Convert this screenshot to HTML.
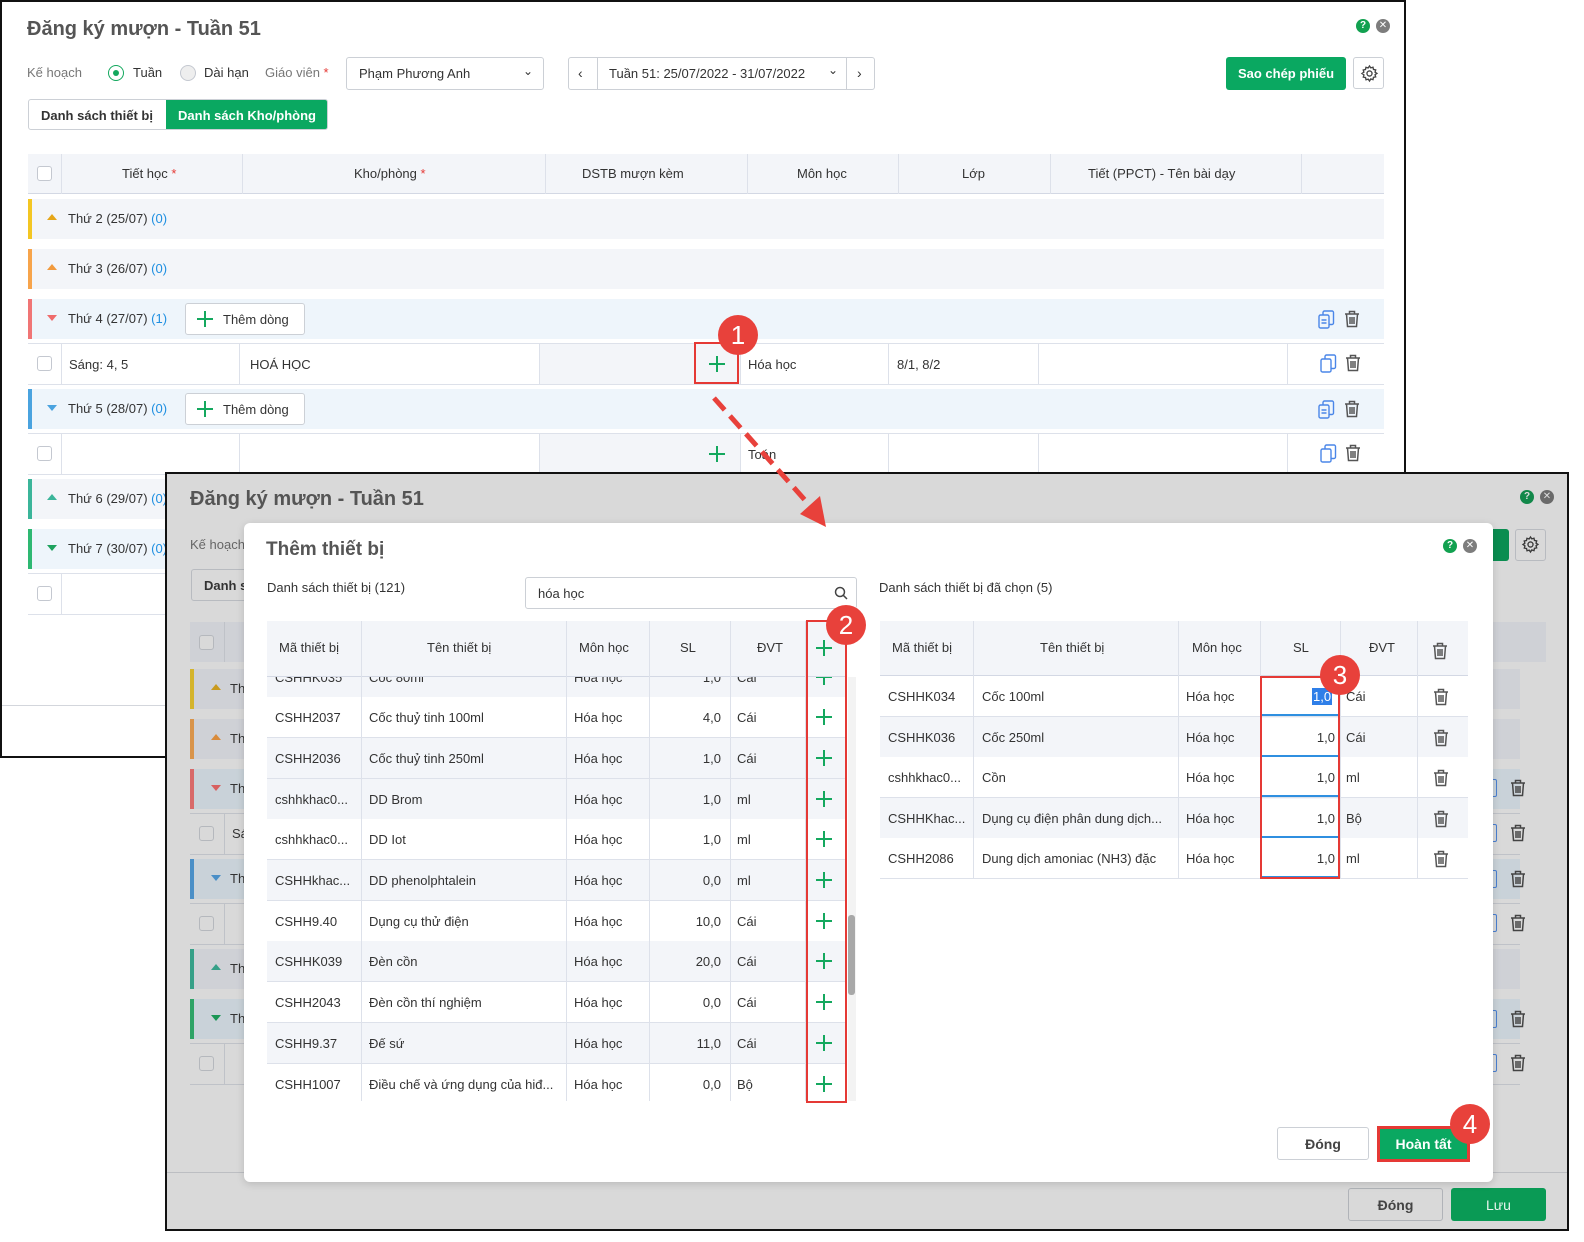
<!DOCTYPE html>
<html><head><meta charset="utf-8">
<style>
*{box-sizing:border-box;margin:0;padding:0}
body{width:1584px;height:1242px;background:#fff;position:relative;overflow:hidden;font-family:"Liberation Sans","DejaVu Sans",sans-serif;font-size:13px;color:#333}
.a{position:absolute}
.win{position:absolute;border:2px solid #111;background:#fff;overflow:hidden}
.t{position:absolute;white-space:nowrap}
.vc{display:flex;align-items:center}
.cb{position:absolute;width:15px;height:15px;border:1px solid #c4c8d0;border-radius:3px;background:#fff}
.plus{position:absolute;width:16px;height:16px}
.plus:before,.plus:after{content:"";position:absolute;background:#14a85e}
.plus:before{left:7px;top:0;width:2px;height:16px}
.plus:after{left:0;top:7px;width:16px;height:2px}
.grp{position:absolute;height:40px}
.bar{position:absolute;left:0;top:0;width:4px;height:40px}
.tri-u{position:absolute;width:0;height:0;border-left:5px solid transparent;border-right:5px solid transparent;border-bottom:6px solid}
.tri-d{position:absolute;width:0;height:0;border-left:5px solid transparent;border-right:5px solid transparent;border-top:6px solid}
.blue{color:#1e8fe1}
.btnw{position:absolute;border:1px solid #ccd0d6;border-radius:3px;background:#fff}
.vl{position:absolute;width:1px;background:#dde1ea}
.hl{position:absolute;height:1px;background:#dde1ea}
.badge{position:absolute;width:40px;height:40px;border-radius:50%;background:#e8413b;color:#fff;font-size:26px;text-align:center;line-height:40px}
.rbox{position:absolute;border:2px solid #e53935}
</style></head><body>

<!-- ================= WINDOW 1 ================= -->
<div class="win" style="left:0;top:0;width:1406px;height:758px">
 <div class="t" style="left:25px;top:16px;font-size:20px;font-weight:bold;color:#555">Đăng ký mượn - Tuần 51</div>
 <div class="a" style="left:1354px;top:17px;width:14px;height:14px;border-radius:50%;background:#12a150;color:#fff;font-size:10px;font-weight:bold;text-align:center;line-height:14px">?</div>
 <div class="a" style="left:1374px;top:17px;width:14px;height:14px;border-radius:50%;background:#7d7d7d;color:#fff;font-size:10px;text-align:center;line-height:14px">✕</div>

 <div class="t" style="left:25px;top:63px;color:#777">Kế hoạch</div>
 <div class="a" style="left:106px;top:63px;width:16px;height:16px;border-radius:50%;border:1px solid #14a85e"><div class="a" style="left:4px;top:4px;width:6px;height:6px;border-radius:50%;background:#14a85e"></div></div>
 <div class="t" style="left:131px;top:63px">Tuần</div>
 <div class="a" style="left:178px;top:63px;width:16px;height:16px;border-radius:50%;border:1px solid #c4c8d0;background:#eee"></div>
 <div class="t" style="left:202px;top:63px">Dài hạn</div>
 <div class="t" style="left:263px;top:63px;color:#777">Giáo viên <span style="color:#e53935">*</span></div>
 <div class="btnw" style="left:344px;top:55px;width:198px;height:33px"><div class="t" style="left:12px;top:8px">Phạm Phương Anh</div><div class="t" style="left:176px;top:6px;font-size:12px">⌄</div></div>
 <div class="btnw" style="left:566px;top:55px;width:307px;height:33px">
  <div class="t" style="left:9px;top:7px;font-size:14px">‹</div>
  <div class="vl" style="left:28px;top:0;height:31px;background:#ccd0d6"></div>
  <div class="t" style="left:40px;top:8px">Tuần 51: 25/07/2022 - 31/07/2022</div>
  <div class="t" style="left:259px;top:5px;font-size:12px">⌄</div>
  <div class="vl" style="left:277px;top:0;height:31px;background:#ccd0d6"></div>
  <div class="t" style="left:288px;top:7px;font-size:14px">›</div>
 </div>
 <div class="a vc" style="left:1224px;top:55px;width:120px;height:33px;background:#0aa861;border-radius:3px;color:#fff;font-weight:bold;justify-content:center">Sao chép phiếu</div>
 <div class="btnw" style="left:1351px;top:55px;width:31px;height:32px"><svg class="a" style="left:6px;top:6px" width="19" height="19" viewBox="0 0 24 24" fill="none" stroke="#444" stroke-width="1.7"><circle cx="12" cy="12" r="3.2"/><path d="M12 2.5l1.6 2.4 2.8-.8.6 2.8 2.8.6-.8 2.8 2.4 1.6-2.4 1.6.8 2.8-2.8.6-.6 2.8-2.8-.8L12 21.5l-1.6-2.4-2.8.8-.6-2.8-2.8-.6.8-2.8L2.5 12l2.4-1.6-.8-2.8 2.8-.6.6-2.8 2.8.8z"/></svg></div>

 <div class="btnw" style="left:26px;top:97px;width:300px;height:31px;overflow:hidden">
  <div class="t" style="left:12px;top:8px;font-weight:bold">Danh sách thiết bị</div>
  <div class="a vc" style="left:137px;top:0;width:162px;height:31px;background:#0aa861;color:#fff;font-weight:bold;justify-content:center">Danh sách Kho/phòng</div>
 </div>

 <div class="a" style="left:26px;top:152px;width:1356px;height:40px;background:#f3f5f9;border-bottom:1px solid #d3d8e4"></div>
 <div class="cb" style="left:35px;top:164px"></div>
 <div class="vl" style="left:59px;top:152px;height:40px"></div><div class="vl" style="left:240px;top:152px;height:40px"></div><div class="vl" style="left:543px;top:152px;height:40px"></div><div class="vl" style="left:745px;top:152px;height:40px"></div><div class="vl" style="left:896px;top:152px;height:40px"></div><div class="vl" style="left:1048px;top:152px;height:40px"></div><div class="vl" style="left:1299px;top:152px;height:40px"></div>
 <div class="t" style="left:120px;top:164px">Tiết học <span style="color:#e53935">*</span></div>
 <div class="t" style="left:352px;top:164px">Kho/phòng <span style="color:#e53935">*</span></div>
 <div class="t" style="left:580px;top:164px">DSTB mượn kèm</div>
 <div class="t" style="left:795px;top:164px">Môn học</div>
 <div class="t" style="left:960px;top:164px">Lớp</div>
 <div class="t" style="left:1086px;top:164px">Tiết (PPCT) - Tên bài dạy</div>

 <div class="grp" style="left:26px;top:197px;width:1356px;background:#f3f5f9"><div class="bar" style="background:#f3c623"></div><div class="tri-u" style="left:19px;top:15px;border-bottom-color:#e5a619"></div><div class="t" style="left:40px;top:12px">Thứ 2 (25/07) <span class="blue">(0)</span></div></div>
 <div class="grp" style="left:26px;top:247px;width:1356px;background:#f3f5f9"><div class="bar" style="background:#f7a44b"></div><div class="tri-u" style="left:19px;top:15px;border-bottom-color:#f19a3e"></div><div class="t" style="left:40px;top:12px">Thứ 3 (26/07) <span class="blue">(0)</span></div></div>
 <div class="grp" style="left:26px;top:297px;width:1356px;background:#eef5fb"><div class="bar" style="background:#f07575"></div><div class="tri-d" style="left:19px;top:16px;border-top-color:#ef6b6b"></div><div class="t" style="left:40px;top:12px">Thứ 4 (27/07) <span class="blue">(1)</span></div></div>
 <div class="btnw" style="left:183px;top:301px;width:120px;height:32px"><div class="plus" style="left:11px;top:7px"></div><div class="t" style="left:37px;top:8px">Thêm dòng</div></div>
 <div class="hl" style="left:26px;top:341px;width:1356px"></div><div class="hl" style="left:26px;top:382px;width:1356px"></div>
 <div class="a" style="left:538px;top:342px;width:200px;height:40px;background:#f3f5f9"></div>
 <div class="vl" style="left:59px;top:342px;height:40px"></div><div class="vl" style="left:237px;top:342px;height:40px"></div><div class="vl" style="left:537px;top:342px;height:40px"></div><div class="vl" style="left:738px;top:342px;height:40px"></div><div class="vl" style="left:886px;top:342px;height:40px"></div><div class="vl" style="left:1036px;top:342px;height:40px"></div><div class="vl" style="left:1285px;top:342px;height:40px"></div>
 <div class="cb" style="left:35px;top:354px"></div>
 <div class="t" style="left:67px;top:355px">Sáng: 4, 5</div><div class="t" style="left:248px;top:355px">HOÁ HỌC</div>
 <div class="plus" style="left:707px;top:354px"></div>
 <div class="t" style="left:746px;top:355px">Hóa học</div><div class="t" style="left:895px;top:355px">8/1, 8/2</div>
 <div class="grp" style="left:26px;top:387px;width:1356px;background:#eef5fb"><div class="bar" style="background:#4aa3df"></div><div class="tri-d" style="left:19px;top:16px;border-top-color:#4aa3df"></div><div class="t" style="left:40px;top:12px">Thứ 5 (28/07) <span class="blue">(0)</span></div></div>
 <div class="btnw" style="left:183px;top:391px;width:120px;height:32px"><div class="plus" style="left:11px;top:7px"></div><div class="t" style="left:37px;top:8px">Thêm dòng</div></div>
 <div class="hl" style="left:26px;top:431px;width:1356px"></div><div class="hl" style="left:26px;top:472px;width:1356px"></div>
 <div class="a" style="left:538px;top:432px;width:200px;height:40px;background:#f3f5f9"></div>
 <div class="vl" style="left:59px;top:432px;height:40px"></div><div class="vl" style="left:237px;top:432px;height:40px"></div><div class="vl" style="left:537px;top:432px;height:40px"></div><div class="vl" style="left:738px;top:432px;height:40px"></div><div class="vl" style="left:886px;top:432px;height:40px"></div><div class="vl" style="left:1036px;top:432px;height:40px"></div><div class="vl" style="left:1285px;top:432px;height:40px"></div>
 <div class="cb" style="left:35px;top:444px"></div>
 <div class="plus" style="left:707px;top:444px"></div><div class="t" style="left:746px;top:445px">Toán</div>
 <div class="grp" style="left:26px;top:477px;width:1356px;background:#f3f5f9"><div class="bar" style="background:#3bb59a"></div><div class="tri-u" style="left:19px;top:15px;border-bottom-color:#3bb59a"></div><div class="t" style="left:40px;top:12px">Thứ 6 (29/07) <span class="blue">(0)</span></div></div>
 <div class="grp" style="left:26px;top:527px;width:1356px;background:#eef5fb"><div class="bar" style="background:#2eb872"></div><div class="tri-d" style="left:19px;top:16px;border-top-color:#1ea25e"></div><div class="t" style="left:40px;top:12px">Thứ 7 (30/07) <span class="blue">(0)</span></div></div>
 <div class="hl" style="left:26px;top:571px;width:1356px"></div><div class="hl" style="left:26px;top:612px;width:1356px"></div>
 <div class="vl" style="left:59px;top:572px;height:40px"></div>
 <div class="cb" style="left:35px;top:584px"></div>
 <div class="hl" style="left:0;top:703px;width:1406px;background:#d3d6dc"></div>
 <svg class="a" style="left:1316px;top:308px" width="18" height="20" viewBox="0 0 18 20" fill="none" stroke="#4a86e8" stroke-width="1.4"><rect x="1" y="5" width="10" height="13" rx="1.5"/><path d="M5 5V2.5A1.5 1.5 0 0 1 6.5 1H14a1.5 1.5 0 0 1 1.5 1.5V13a1.5 1.5 0 0 1-1.5 1.5h-3"/><path d="M3.5 10h5M3.5 13h5"/></svg>
 <svg class="a" style="left:1316px;top:398px" width="18" height="20" viewBox="0 0 18 20" fill="none" stroke="#4a86e8" stroke-width="1.4"><rect x="1" y="5" width="10" height="13" rx="1.5"/><path d="M5 5V2.5A1.5 1.5 0 0 1 6.5 1H14a1.5 1.5 0 0 1 1.5 1.5V13a1.5 1.5 0 0 1-1.5 1.5h-3"/><path d="M3.5 10h5M3.5 13h5"/></svg>
 <svg class="a" style="left:1318px;top:352px" width="18" height="20" viewBox="0 0 18 20" fill="none" stroke="#4a86e8" stroke-width="1.4"><rect x="1" y="5" width="10" height="13" rx="1.5"/><path d="M5 5V2.5A1.5 1.5 0 0 1 6.5 1H14a1.5 1.5 0 0 1 1.5 1.5V13a1.5 1.5 0 0 1-1.5 1.5h-3"/></svg>
 <svg class="a" style="left:1318px;top:442px" width="18" height="20" viewBox="0 0 18 20" fill="none" stroke="#4a86e8" stroke-width="1.4"><rect x="1" y="5" width="10" height="13" rx="1.5"/><path d="M5 5V2.5A1.5 1.5 0 0 1 6.5 1H14a1.5 1.5 0 0 1 1.5 1.5V13a1.5 1.5 0 0 1-1.5 1.5h-3"/></svg>
 <svg class="a" style="left:1342px;top:308px" width="16" height="18" viewBox="0 0 16 18" fill="none" stroke="#555" stroke-width="1.5"><path d="M1 4h14M5.5 4V1.5h5V4M2.5 4l1 12.5h9l1-12.5M6 7v7M8 7v7M10 7v7"/></svg>
 <svg class="a" style="left:1343px;top:352px" width="16" height="18" viewBox="0 0 16 18" fill="none" stroke="#555" stroke-width="1.5"><path d="M1 4h14M5.5 4V1.5h5V4M2.5 4l1 12.5h9l1-12.5M6 7v7M8 7v7M10 7v7"/></svg>
 <svg class="a" style="left:1342px;top:398px" width="16" height="18" viewBox="0 0 16 18" fill="none" stroke="#555" stroke-width="1.5"><path d="M1 4h14M5.5 4V1.5h5V4M2.5 4l1 12.5h9l1-12.5M6 7v7M8 7v7M10 7v7"/></svg>
 <svg class="a" style="left:1343px;top:442px" width="16" height="18" viewBox="0 0 16 18" fill="none" stroke="#555" stroke-width="1.5"><path d="M1 4h14M5.5 4V1.5h5V4M2.5 4l1 12.5h9l1-12.5M6 7v7M8 7v7M10 7v7"/></svg>
</div>

<div class="rbox" style="left:694px;top:342px;width:45px;height:42px"></div>
<div class="badge" style="left:718px;top:315px">1</div>

<!-- ================= WINDOW 2 ================= -->
<div class="win" style="left:165px;top:472px;width:1404px;height:759px;background:#d9d9d9">
 <div class="t" style="left:23px;top:14px;font-size:20px;font-weight:bold;color:#555">Đăng ký mượn - Tuần 51</div>
 <div class="a" style="left:1353px;top:16px;width:14px;height:14px;border-radius:50%;background:#12884a;color:#ddd;font-size:10px;font-weight:bold;text-align:center;line-height:14px">?</div>
 <div class="a" style="left:1373px;top:16px;width:14px;height:14px;border-radius:50%;background:#6a6a6a;color:#ddd;font-size:10px;text-align:center;line-height:14px">✕</div>
 <div class="t" style="left:23px;top:63px;color:#666">Kế hoạch</div>
 <div class="a" style="left:1300px;top:55px;width:42px;height:32px;background:#0a8d50;border-radius:3px"></div>
 <div class="a" style="left:1348px;top:55px;width:31px;height:32px;border:1px solid #b8bbc0;border-radius:3px"><svg class="a" style="left:5px;top:5px" width="19" height="19" viewBox="0 0 24 24" fill="none" stroke="#3a3a3a" stroke-width="1.7"><circle cx="12" cy="12" r="3.2"/><path d="M12 2.5l1.6 2.4 2.8-.8.6 2.8 2.8.6-.8 2.8 2.4 1.6-2.4 1.6.8 2.8-2.8.6-.6 2.8-2.8-.8L12 21.5l-1.6-2.4-2.8.8-.6-2.8-2.8-.6.8-2.8L2.5 12l2.4-1.6-.8-2.8 2.8-.6.6-2.8 2.8.8z"/></svg></div>
 <div class="a" style="left:24px;top:95px;width:100px;height:32px;border:1px solid #b8bbc0;border-radius:3px"><div class="t" style="left:12px;top:8px;font-weight:bold">Danh sách</div></div>
 <div class="a" style="left:23px;top:148px;width:1356px;height:40px;background:#cfd1d6"></div>
 <div class="cb" style="left:32px;top:161px;background:#d9d9d9;border-color:#b5b8bd"></div>
 <div class="vl" style="left:57px;top:148px;height:40px;background:#bfc2c8"></div>
 <div class="grp" style="left:23px;top:195px;width:1330px;background:#cfd1d6"><div class="bar" style="background:#d4b42c"></div><div class="tri-u" style="left:21px;top:15px;border-bottom-color:#c99a1e"></div><div class="t" style="left:40px;top:12px">Thứ</div></div>
 <div class="grp" style="left:23px;top:245px;width:1330px;background:#cfd1d6"><div class="bar" style="background:#d9944a"></div><div class="tri-u" style="left:21px;top:15px;border-bottom-color:#d98b3b"></div><div class="t" style="left:40px;top:12px">Thứ</div></div>
 <div class="grp" style="left:23px;top:295px;width:1330px;background:#c9d2d9"><div class="bar" style="background:#d86a6a"></div><div class="tri-d" style="left:21px;top:16px;border-top-color:#d86060"></div><div class="t" style="left:40px;top:12px">Thứ</div></div>
 <div class="hl" style="left:23px;top:339px;width:1330px;background:#bfc2c8"></div><div class="hl" style="left:23px;top:380px;width:1330px;background:#bfc2c8"></div>
 <div class="cb" style="left:32px;top:352px;background:#d9d9d9;border-color:#b5b8bd"></div><div class="vl" style="left:57px;top:340px;height:40px;background:#bfc2c8"></div><div class="t" style="left:65px;top:352px">Sá</div>
 <div class="grp" style="left:23px;top:385px;width:1330px;background:#c9d2d9"><div class="bar" style="background:#4a8fc7"></div><div class="tri-d" style="left:21px;top:16px;border-top-color:#4a8fc7"></div><div class="t" style="left:40px;top:12px">Thứ</div></div>
 <div class="hl" style="left:23px;top:429px;width:1330px;background:#bfc2c8"></div><div class="hl" style="left:23px;top:470px;width:1330px;background:#bfc2c8"></div>
 <div class="cb" style="left:32px;top:442px;background:#d9d9d9;border-color:#b5b8bd"></div><div class="vl" style="left:57px;top:430px;height:40px;background:#bfc2c8"></div>
 <div class="grp" style="left:23px;top:475px;width:1330px;background:#cfd1d6"><div class="bar" style="background:#36a088"></div><div class="tri-u" style="left:21px;top:15px;border-bottom-color:#36a088"></div><div class="t" style="left:40px;top:12px">Thứ</div></div>
 <div class="grp" style="left:23px;top:525px;width:1330px;background:#c9d2d9"><div class="bar" style="background:#2ea366"></div><div class="tri-d" style="left:21px;top:16px;border-top-color:#1a9655"></div><div class="t" style="left:40px;top:12px">Thứ</div></div>
 <div class="hl" style="left:23px;top:569px;width:1330px;background:#bfc2c8"></div><div class="hl" style="left:23px;top:610px;width:1330px;background:#bfc2c8"></div>
 <div class="cb" style="left:32px;top:582px;background:#d9d9d9;border-color:#b5b8bd"></div><div class="vl" style="left:57px;top:570px;height:40px;background:#bfc2c8"></div>
 <div class="hl" style="left:0;top:698px;width:1404px;background:#bcbec2"></div>
 <div class="a vc" style="left:1181px;top:714px;width:95px;height:33px;border:1px solid #b0b3b8;border-radius:3px;justify-content:center;font-weight:bold;color:#444;font-size:14px">Đóng</div>
 <div class="a vc" style="left:1284px;top:714px;width:95px;height:33px;background:#0a9a55;border-radius:3px;justify-content:center;color:#e8f5ee;font-size:14px">Lưu</div>
 <svg class="a" style="left:1343px;top:305px" width="16" height="18" viewBox="0 0 16 18" fill="none" stroke="#444" stroke-width="1.5"><path d="M1 4h14M5.5 4V1.5h5V4M2.5 4l1 12.5h9l1-12.5M6 7v7M8 7v7M10 7v7"/></svg>
 <svg class="a" style="left:1343px;top:350px" width="16" height="18" viewBox="0 0 16 18" fill="none" stroke="#444" stroke-width="1.5"><path d="M1 4h14M5.5 4V1.5h5V4M2.5 4l1 12.5h9l1-12.5M6 7v7M8 7v7M10 7v7"/></svg>
 <svg class="a" style="left:1343px;top:396px" width="16" height="18" viewBox="0 0 16 18" fill="none" stroke="#444" stroke-width="1.5"><path d="M1 4h14M5.5 4V1.5h5V4M2.5 4l1 12.5h9l1-12.5M6 7v7M8 7v7M10 7v7"/></svg>
 <svg class="a" style="left:1343px;top:440px" width="16" height="18" viewBox="0 0 16 18" fill="none" stroke="#444" stroke-width="1.5"><path d="M1 4h14M5.5 4V1.5h5V4M2.5 4l1 12.5h9l1-12.5M6 7v7M8 7v7M10 7v7"/></svg>
 <svg class="a" style="left:1343px;top:536px" width="16" height="18" viewBox="0 0 16 18" fill="none" stroke="#444" stroke-width="1.5"><path d="M1 4h14M5.5 4V1.5h5V4M2.5 4l1 12.5h9l1-12.5M6 7v7M8 7v7M10 7v7"/></svg>
 <svg class="a" style="left:1343px;top:580px" width="16" height="18" viewBox="0 0 16 18" fill="none" stroke="#444" stroke-width="1.5"><path d="M1 4h14M5.5 4V1.5h5V4M2.5 4l1 12.5h9l1-12.5M6 7v7M8 7v7M10 7v7"/></svg>
 <div class="a" style="left:1324px;top:305px;width:6px;height:18px;border:1.5px solid #4a7fd0;border-left:none;border-radius:0 2px 2px 0"></div>
 <div class="a" style="left:1324px;top:350px;width:6px;height:18px;border:1.5px solid #4a7fd0;border-left:none;border-radius:0 2px 2px 0"></div>
 <div class="a" style="left:1324px;top:396px;width:6px;height:18px;border:1.5px solid #4a7fd0;border-left:none;border-radius:0 2px 2px 0"></div>
 <div class="a" style="left:1324px;top:440px;width:6px;height:18px;border:1.5px solid #4a7fd0;border-left:none;border-radius:0 2px 2px 0"></div>
 <div class="a" style="left:1324px;top:536px;width:6px;height:18px;border:1.5px solid #4a7fd0;border-left:none;border-radius:0 2px 2px 0"></div>
 <div class="a" style="left:1324px;top:580px;width:6px;height:18px;border:1.5px solid #4a7fd0;border-left:none;border-radius:0 2px 2px 0"></div>
</div>

<!-- ================= DIALOG ================= -->
<div class="a" style="left:244px;top:523px;width:1249px;height:659px;background:#fff;border-radius:6px;box-shadow:0 2px 8px rgba(0,0,0,.15)">
 <div class="t" style="left:22px;top:16px;font-size:19px;font-weight:bold;color:#555">Thêm thiết bị</div>
 <div class="a" style="left:1199px;top:16px;width:14px;height:14px;border-radius:50%;background:#12a150;color:#fff;font-size:10px;font-weight:bold;text-align:center;line-height:14px">?</div>
 <div class="a" style="left:1219px;top:16px;width:14px;height:14px;border-radius:50%;background:#7d7d7d;color:#fff;font-size:10px;text-align:center;line-height:14px">✕</div>
 <div class="t" style="left:23px;top:57px">Danh sách thiết bị (121)</div>
 <div class="btnw" style="left:281px;top:54px;width:332px;height:32px"><div class="t" style="left:12px;top:8px">hóa học</div>
  <svg class="a" style="left:308px;top:8px" width="14" height="14" viewBox="0 0 14 14" fill="none" stroke="#444" stroke-width="1.5"><circle cx="6" cy="6" r="4.5"/><path d="M9.3 9.3L13 13"/></svg></div>
 <div class="t" style="left:635px;top:57px">Danh sách thiết bị đã chọn (5)</div>
</div>

<!-- left table -->
<div class="a" style="left:267px;top:621px;width:580px;height:480px;overflow:hidden">
 <div id="lrows"></div>
 <div class="a" style="left:0;top:0;width:580px;height:56px;background:#f3f5f9;border-bottom:1px solid #d3d8e4">
 <div class="vl" style="left:94px;top:0;height:56px"></div><div class="vl" style="left:299px;top:0;height:56px"></div><div class="vl" style="left:382px;top:0;height:56px"></div><div class="vl" style="left:463px;top:0;height:56px"></div><div class="vl" style="left:538px;top:0;height:56px"></div>
 <div class="t" style="left:12px;top:19px">Mã thiết bị</div>
 <div class="t" style="left:160px;top:19px">Tên thiết bị</div>
 <div class="t" style="left:312px;top:19px">Môn học</div>
 <div class="t" style="left:413px;top:19px">SL</div>
 <div class="t" style="left:490px;top:19px">ĐVT</div>
 <div class="plus" style="left:549px;top:19px"></div>
 </div>
</div>
<div class="a" style="left:848px;top:677px;width:8px;height:424px;background:#f3f3f3"></div>
<div class="a" style="left:848px;top:915px;width:7px;height:80px;background:#a8a8a8;border-radius:3px"></div>

<!-- right table -->
<div class="a" style="left:880px;top:621px;width:588px;height:260px;overflow:hidden">
 <div class="a" style="left:0;top:0;width:588px;height:55px;background:#f3f5f9;border-bottom:1px solid #d3d8e4"></div>
 <div class="vl" style="left:93px;top:0;height:55px"></div><div class="vl" style="left:298px;top:0;height:55px"></div><div class="vl" style="left:380px;top:0;height:55px"></div><div class="vl" style="left:460px;top:0;height:55px"></div><div class="vl" style="left:537px;top:0;height:55px"></div>
 <div class="t" style="left:12px;top:19px">Mã thiết bị</div>
 <div class="t" style="left:160px;top:19px">Tên thiết bị</div>
 <div class="t" style="left:312px;top:19px">Môn học</div>
 <div class="t" style="left:413px;top:19px">SL</div>
 <div class="t" style="left:489px;top:19px">ĐVT</div>
 <svg class="a" style="left:552px;top:21px" width="16" height="18" viewBox="0 0 16 18" fill="none" stroke="#555" stroke-width="1.5"><path d="M1 4h14M5.5 4V1.5h5V4M2.5 4l1 12.5h9l1-12.5M6 7v7M8 7v7M10 7v7"/></svg>
 <div id="rrows"></div>
</div>

<div class="rbox" style="left:806px;top:620px;width:41px;height:483px"></div>
<div class="badge" style="left:826px;top:605px">2</div>
<div class="rbox" style="left:1260px;top:676px;width:80px;height:203px"></div>
<div class="badge" style="left:1320px;top:655px">3</div>

<div class="a vc" style="left:1277px;top:1127px;width:92px;height:33px;border:1px solid #ccd0d6;border-radius:3px;justify-content:center;font-weight:bold;color:#444;font-size:14px">Đóng</div>
<div class="a vc" style="left:1377px;top:1126px;width:93px;height:36px;background:#0aa861;border:3px solid #e53935;justify-content:center;color:#fff;font-weight:bold;font-size:14px">Hoàn tất</div>
<div class="badge" style="left:1450px;top:1104px">4</div>

<!-- arrow on top -->
<svg class="a" style="left:700px;top:390px" width="140" height="145" viewBox="0 0 140 145"><path d="M14 8L112 118" stroke="#e8413b" stroke-width="5" stroke-dasharray="16 8" fill="none"/><path d="M126 137L100 124L120 106Z" fill="#e8413b"/></svg>

<script>
var L=[["CSHHK035","Cốc 80ml","1,0","Cái"],["CSHH2037","Cốc thuỷ tinh 100ml","4,0","Cái"],["CSHH2036","Cốc thuỷ tinh 250ml","1,0","Cái"],["cshhkhac0...","DD Brom","1,0","ml"],["cshhkhac0...","DD Iot","1,0","ml"],["CSHHkhac...","DD phenolphtalein","0,0","ml"],["CSHH9.40","Dụng cụ thử điện","10,0","Cái"],["CSHHK039","Đèn cồn","20,0","Cái"],["CSHH2043","Đèn cồn thí nghiệm","0,0","Cái"],["CSHH9.37","Đế sứ","11,0","Cái"],["CSHH1007","Điều chế và ứng dụng của hiđ...","0,0","Bộ"]];
var h="",y=56-20.5,bg=["#f3f5f9","#fff","#f3f5f9","#f3f5f9","#fff","#f3f5f9","#fff","#f3f5f9","#fff","#f3f5f9","#fff"];
L.forEach(function(r,i){var top=Math.round(y+i*40.7);
h+='<div class="a" style="left:0;top:'+top+'px;width:580px;height:41px;background:'+bg[i]+';border-bottom:1px solid #dde1ea"></div>';
[94,299,382,463,538].forEach(function(x){h+='<div class="vl" style="left:'+x+'px;top:'+top+'px;height:41px"></div>'});
var ty=top+13;
h+='<div class="t" style="left:8px;top:'+ty+'px">'+r[0]+'</div><div class="t" style="left:102px;top:'+ty+'px">'+r[1]+'</div><div class="t" style="left:307px;top:'+ty+'px">Hóa học</div><div class="t" style="left:384px;top:'+ty+'px;width:70px;text-align:right">'+r[2]+'</div><div class="t" style="left:470px;top:'+ty+'px">'+r[3]+'</div><div class="plus" style="left:549px;top:'+(top+12)+'px"></div>';});
document.getElementById("lrows").outerHTML=h;
var R=[["CSHHK034","Cốc 100ml","Cái"],["CSHHK036","Cốc 250ml","Cái"],["cshhkhac0...","Cồn","ml"],["CSHHKhac...","Dụng cụ điện phân dung dịch...","Bộ"],["CSHH2086","Dung dịch amoniac (NH3) đặc","ml"]];
h="";R.forEach(function(r,i){var top=55+Math.round(i*40.6);var b=i%2?"#f3f5f9":"#fff";
h+='<div class="a" style="left:0;top:'+top+'px;width:588px;height:41px;background:'+b+';border-bottom:1px solid #dde1ea"></div>';
[93,298,380,460,537].forEach(function(x){h+='<div class="vl" style="left:'+x+'px;top:'+top+'px;height:41px"></div>'});
h+='<div class="a" style="left:381px;top:'+(top+1)+'px;width:79px;height:39px;background:#fff;border-bottom:2px solid #2f8fe0"></div>';
var ty=top+13;
h+='<div class="t" style="left:8px;top:'+ty+'px">'+r[0]+'</div><div class="t" style="left:102px;top:'+ty+'px">'+r[1]+'</div><div class="t" style="left:306px;top:'+ty+'px">Hóa học</div>'+(i==0?'<div class="t" style="left:432px;top:'+(ty-1)+'px;background:#2f7fe8;color:#fff;padding:1px 1px">1,0</div>':'<div class="t" style="left:385px;top:'+ty+'px;width:70px;text-align:right">1,0</div>')+'<div class="t" style="left:466px;top:'+ty+'px">'+r[2]+'</div><svg class="a" style="left:553px;top:'+(top+12)+'px" width="16" height="18" viewBox="0 0 16 18" fill="none" stroke="#555" stroke-width="1.5"><path d="M1 4h14M5.5 4V1.5h5V4M2.5 4l1 12.5h9l1-12.5M6 7v7M8 7v7M10 7v7"/></svg>';});
document.getElementById("rrows").outerHTML=h;
</script>
</body></html>
